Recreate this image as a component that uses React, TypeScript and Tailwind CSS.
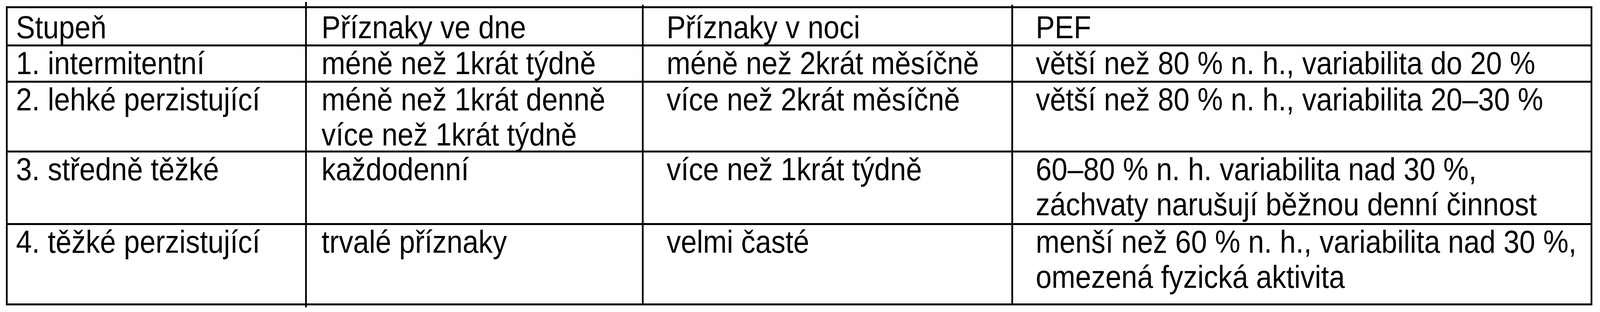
import React, { useLayoutEffect, useState } from "react";

// the table is drawn on a 4599px wide sheet
const SHEET_WIDTH = 4599;

const colPad = ["pl-[24px]", "pl-[42px]", "pl-[66px]", "pl-[65px]"];

const header = ["Stupeň", "Příznaky ve dne", "Příznaky v noci", "PEF"];

const rows: string[][][] = [
  [
    ["1. intermitentní"],
    ["méně než 1krát týdně"],
    ["méně než 2krát měsíčně"],
    ["větší než 80 % n. h., variabilita do 20 %"],
  ],
  [
    ["2. lehké perzistující"],
    ["méně než 1krát denně", "více než 1krát týdně"],
    ["více než 2krát měsíčně"],
    ["větší než 80 % n. h., variabilita 20–30 %"],
  ],
  [
    ["3. středně těžké"],
    ["každodenní"],
    ["více než 1krát týdně"],
    ["60–80 % n. h. variabilita nad 30 %,", "záchvaty narušují běžnou denní činnost"],
  ],
  [
    ["4. těžké perzistující"],
    ["trvalé příznaky"],
    ["velmi časté"],
    ["menší než 60 % n. h., variabilita nad 30 %,", "omezená fyzická aktivita"],
  ],
];

function useFitWidth() {
  const [scale, setScale] = useState(1);

  useLayoutEffect(() => {
    const update = () => {
      const w = document.documentElement.clientWidth || window.innerWidth;
      setScale(Math.min(1, w / SHEET_WIDTH));
    };
    update();
    window.addEventListener("resize", update);
    return () => window.removeEventListener("resize", update);
  }, []);

  return scale;
}

export default function App() {
  const scale = useFitWidth();

  return (
    <div className="w-full h-[800px] overflow-hidden bg-white">
      <div
        className="w-[4599px] h-[800px] origin-top-left pl-[17px] pt-[16px] text-black"
        style={{
          fontFamily: '"Liberation Sans", Arial, sans-serif',
          transform: `scaleX(${scale})`,
        }}
      >
        <div className="relative w-[4560px]">
          {/* column rules poke out a little past the frame */}
          <span className="absolute left-[860px] -top-[11px] w-[5px] h-[11px] bg-black" />
          <span className="absolute left-[1828px] -top-[4px] w-[5px] h-[4px] bg-black" />
          <span className="absolute left-[2890px] -top-[4px] w-[5px] h-[4px] bg-black" />
          <span className="absolute left-[860px] -bottom-[5px] w-[5px] h-[5px] bg-black" />

          <div className="grid grid-cols-[855px_963px_1057px_1660px] grid-rows-[93px_88px_174px_181px_201px] gap-[5px] p-[5px] bg-black text-[82px] leading-[90px]">
            {header.map((h, i) => (
              <div key={h} className={`bg-white whitespace-nowrap ${colPad[i]}`}>
                <div className="mt-[4px]">{h}</div>
              </div>
            ))}
            {rows.map((row, r) =>
              row.map((cell, c) => (
                <div key={`${r}-${c}`} className={`bg-white whitespace-nowrap ${colPad[c]}`}>
                  <div className="-mt-[2px]">
                    {cell.map((line) => (
                      <div key={line}>{line}</div>
                    ))}
                  </div>
                </div>
              )),
            )}
          </div>
        </div>
      </div>
    </div>
  );
}
